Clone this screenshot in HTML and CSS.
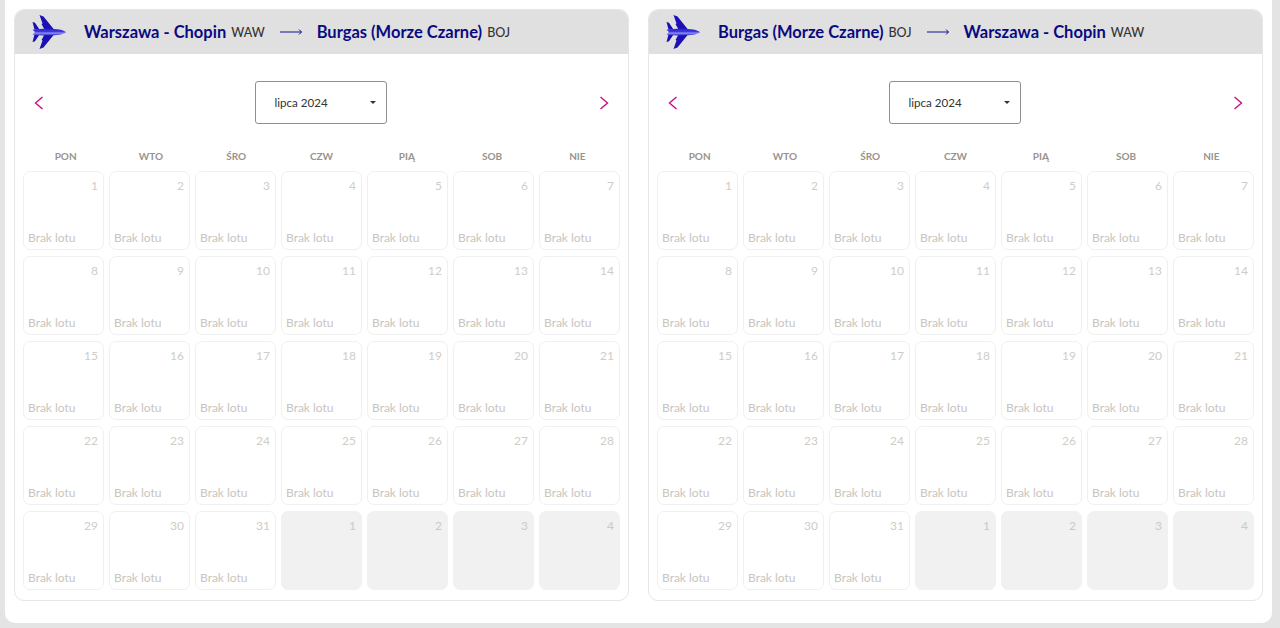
FILE: index.html
```html
<!DOCTYPE html>
<html lang="pl">
  <head>
    <meta charset="UTF-8" />
    <meta name="viewport" content="width=device-width, initial-scale=1.0" />
    <title>Kalendarz lotow</title>
    <link rel="stylesheet" href="styles.css">
  </head>
  <body>
    <div class="page">
      <section class="panel">
        <header class="route">
          <svg class="plane" viewBox="0 0 36 36"><defs><linearGradient id="body1" x1="0" y1="0" x2="0" y2="1"><stop offset="0" stop-color="#2a22c8"/><stop offset="0.45" stop-color="#3f3adf"/><stop offset="0.65" stop-color="#9094f6"/><stop offset="1" stop-color="#2a22c8"/></linearGradient></defs><path fill="#1a10b4" d="M8.500 1l4 1.500 10.500 13h-9.500l-3-5.500 1-.5zM8.500 35l4-1.500 10.500-13h-9.500l-3 5.500 1 .5zM1.500 8l2.500 .8 4.500 6.700h-5zM1.500 28l2.500-.8 4.500-6.700h-5z"/><path fill="url(#body1)" d="M1.500 15.800c8-1.300 20-1.300 27-.3 3 .4 5.500 1.700 6.500 2.800-1 .9-3.500 1.900-6.500 2.400-7 1-19 1-27-.3l2.500-2.300z"/></svg>
          <span class="city">Warszawa - Chopin</span> <span class="code">WAW</span>
          <svg class="arrow" viewBox="0 0 22 8"><path d="M0 4h21.500M19 1.500l2.500 2.500-2.500 2.500" fill="none" stroke="#10108c" stroke-width="1"/></svg>
          <span class="city">Burgas (Morze Czarne)</span> <span class="code">BOJ</span>
        </header>
        <div class="body">
          <div class="nav">
            <svg class="chev" viewBox="0 0 10 14"><path d="M8.500 1l-7 6 7 6" fill="none" stroke="#c5127f" stroke-width="1.400"/></svg>
            <div class="select"><span>lipca 2024</span><i class="caret"></i></div>
            <svg class="chev" viewBox="0 0 10 14"><path d="M1.500 1l7 6-7 6" fill="none" stroke="#c5127f" stroke-width="1.400"/></svg>
          </div>
          <div class="week">
            <span>PON</span><span>WTO</span><span>ŚRO</span><span>CZW</span><span>PIĄ</span><span>SOB</span><span>NIE</span>
          </div>
          <div class="days">
            <div class="day"><b>1</b><span>Brak lotu</span></div>
            <div class="day"><b>2</b><span>Brak lotu</span></div>
            <div class="day"><b>3</b><span>Brak lotu</span></div>
            <div class="day"><b>4</b><span>Brak lotu</span></div>
            <div class="day"><b>5</b><span>Brak lotu</span></div>
            <div class="day"><b>6</b><span>Brak lotu</span></div>
            <div class="day"><b>7</b><span>Brak lotu</span></div>
            <div class="day"><b>8</b><span>Brak lotu</span></div>
            <div class="day"><b>9</b><span>Brak lotu</span></div>
            <div class="day"><b>10</b><span>Brak lotu</span></div>
            <div class="day"><b>11</b><span>Brak lotu</span></div>
            <div class="day"><b>12</b><span>Brak lotu</span></div>
            <div class="day"><b>13</b><span>Brak lotu</span></div>
            <div class="day"><b>14</b><span>Brak lotu</span></div>
            <div class="day"><b>15</b><span>Brak lotu</span></div>
            <div class="day"><b>16</b><span>Brak lotu</span></div>
            <div class="day"><b>17</b><span>Brak lotu</span></div>
            <div class="day"><b>18</b><span>Brak lotu</span></div>
            <div class="day"><b>19</b><span>Brak lotu</span></div>
            <div class="day"><b>20</b><span>Brak lotu</span></div>
            <div class="day"><b>21</b><span>Brak lotu</span></div>
            <div class="day"><b>22</b><span>Brak lotu</span></div>
            <div class="day"><b>23</b><span>Brak lotu</span></div>
            <div class="day"><b>24</b><span>Brak lotu</span></div>
            <div class="day"><b>25</b><span>Brak lotu</span></div>
            <div class="day"><b>26</b><span>Brak lotu</span></div>
            <div class="day"><b>27</b><span>Brak lotu</span></div>
            <div class="day"><b>28</b><span>Brak lotu</span></div>
            <div class="day"><b>29</b><span>Brak lotu</span></div>
            <div class="day"><b>30</b><span>Brak lotu</span></div>
            <div class="day"><b>31</b><span>Brak lotu</span></div>
            <div class="day off"><b>1</b></div>
            <div class="day off"><b>2</b></div>
            <div class="day off"><b>3</b></div>
            <div class="day off"><b>4</b></div>
          </div>
        </div>
      </section>

      <section class="panel">
        <header class="route">
          <svg class="plane" viewBox="0 0 36 36"><defs><linearGradient id="body2" x1="0" y1="0" x2="0" y2="1"><stop offset="0" stop-color="#2a22c8"/><stop offset="0.45" stop-color="#3f3adf"/><stop offset="0.65" stop-color="#9094f6"/><stop offset="1" stop-color="#2a22c8"/></linearGradient></defs><path fill="#1a10b4" d="M8.500 1l4 1.500 10.500 13h-9.500l-3-5.500 1-.5zM8.500 35l4-1.500 10.500-13h-9.500l-3 5.500 1 .5zM1.500 8l2.500 .8 4.500 6.700h-5zM1.500 28l2.500-.8 4.500-6.700h-5z"/><path fill="url(#body2)" d="M1.500 15.800c8-1.300 20-1.300 27-.3 3 .4 5.500 1.700 6.500 2.800-1 .9-3.500 1.900-6.500 2.400-7 1-19 1-27-.3l2.500-2.300z"/></svg>
          <span class="city">Burgas (Morze Czarne)</span> <span class="code">BOJ</span>
          <svg class="arrow" viewBox="0 0 22 8"><path d="M0 4h21.500M19 1.500l2.500 2.500-2.500 2.500" fill="none" stroke="#10108c" stroke-width="1"/></svg>
          <span class="city">Warszawa - Chopin</span> <span class="code">WAW</span>
        </header>
        <div class="body">
          <div class="nav">
            <svg class="chev" viewBox="0 0 10 14"><path d="M8.500 1l-7 6 7 6" fill="none" stroke="#c5127f" stroke-width="1.400"/></svg>
            <div class="select"><span>lipca 2024</span><i class="caret"></i></div>
            <svg class="chev" viewBox="0 0 10 14"><path d="M1.500 1l7 6-7 6" fill="none" stroke="#c5127f" stroke-width="1.400"/></svg>
          </div>
          <div class="week">
            <span>PON</span><span>WTO</span><span>ŚRO</span><span>CZW</span><span>PIĄ</span><span>SOB</span><span>NIE</span>
          </div>
          <div class="days">
            <div class="day"><b>1</b><span>Brak lotu</span></div>
            <div class="day"><b>2</b><span>Brak lotu</span></div>
            <div class="day"><b>3</b><span>Brak lotu</span></div>
            <div class="day"><b>4</b><span>Brak lotu</span></div>
            <div class="day"><b>5</b><span>Brak lotu</span></div>
            <div class="day"><b>6</b><span>Brak lotu</span></div>
            <div class="day"><b>7</b><span>Brak lotu</span></div>
            <div class="day"><b>8</b><span>Brak lotu</span></div>
            <div class="day"><b>9</b><span>Brak lotu</span></div>
            <div class="day"><b>10</b><span>Brak lotu</span></div>
            <div class="day"><b>11</b><span>Brak lotu</span></div>
            <div class="day"><b>12</b><span>Brak lotu</span></div>
            <div class="day"><b>13</b><span>Brak lotu</span></div>
            <div class="day"><b>14</b><span>Brak lotu</span></div>
            <div class="day"><b>15</b><span>Brak lotu</span></div>
            <div class="day"><b>16</b><span>Brak lotu</span></div>
            <div class="day"><b>17</b><span>Brak lotu</span></div>
            <div class="day"><b>18</b><span>Brak lotu</span></div>
            <div class="day"><b>19</b><span>Brak lotu</span></div>
            <div class="day"><b>20</b><span>Brak lotu</span></div>
            <div class="day"><b>21</b><span>Brak lotu</span></div>
            <div class="day"><b>22</b><span>Brak lotu</span></div>
            <div class="day"><b>23</b><span>Brak lotu</span></div>
            <div class="day"><b>24</b><span>Brak lotu</span></div>
            <div class="day"><b>25</b><span>Brak lotu</span></div>
            <div class="day"><b>26</b><span>Brak lotu</span></div>
            <div class="day"><b>27</b><span>Brak lotu</span></div>
            <div class="day"><b>28</b><span>Brak lotu</span></div>
            <div class="day"><b>29</b><span>Brak lotu</span></div>
            <div class="day"><b>30</b><span>Brak lotu</span></div>
            <div class="day"><b>31</b><span>Brak lotu</span></div>
            <div class="day off"><b>1</b></div>
            <div class="day off"><b>2</b></div>
            <div class="day off"><b>3</b></div>
            <div class="day off"><b>4</b></div>
          </div>
        </div>
      </section>
    </div>
  </body>
</html>
```

FILE: styles.css
```css
html, body {
  height: 100%;
}
body {
  margin: 0;
  padding: 0 8px 5px 5px;
  box-sizing: border-box;
  background: #e4e4e4;
  font-family: "Lato", sans-serif;
  overflow: hidden;
}
.page {
  background: #fff;
  border-radius: 0 0 10px 10px;
  padding: 9px 9px 22px;
  display: grid;
  grid-template-columns: 615px 615px;
  gap: 19px;
}
.panel {
  border: 1px solid #e6e6e6;
  border-radius: 10px;
  overflow: hidden;
  box-sizing: border-box;
  height: 592px;
}
.route {
  height: 45px;
  margin: -1px -1px 0;
  background: #e0e0e0;
  display: flex;
  align-items: center;
  padding-left: 17px;
}
.plane {
  width: 36px;
  height: 36px;
  margin-right: 17px;
  flex: none;
}
.city {
  font-size: 16.500px;
  font-weight: 700;
  color: #0a0a80;
}
.code {
  font-size: 12.500px;
  font-weight: 500;
  color: #333;
  margin-left: 5px;
  position: relative;
  top: 1px;
}
.arrow {
  width: 22px;
  height: 8px;
  margin: 0 15px;
  flex: none;
}
.body {
  padding: 0 8px;
}
.nav {
  display: flex;
  justify-content: space-between;
  align-items: center;
  padding: 27px 11px 0;
  height: 43px;
}
.chev {
  width: 10px;
  height: 14px;
}
.select {
  width: 132px;
  height: 43px;
  margin-left: -2px;
  box-sizing: border-box;
  border: 1px solid #8f8f8f;
  border-radius: 3px;
  display: flex;
  align-items: center;
  justify-content: space-between;
  padding: 0 10px 0 19px;
  font-size: 11.600px;
  color: #333;
}
.caret {
  border: 3px solid transparent;
  border-top-color: #333;
  border-bottom: 0;
  width: 0;
  height: 0;
}
.week {
  display: grid;
  grid-template-columns: repeat(7, 1fr);
  margin-top: 21px;
  height: 21px;
  align-items: center;
  text-align: center;
  font-size: 10px;
  font-weight: 700;
  color: #98948c;
}
.days {
  display: grid;
  grid-template-columns: repeat(7, 81px);
  grid-auto-rows: 79px;
  gap: 6px 5px;
  margin-top: 5px;
}
.day {
  border: 1px solid #f0f0f0;
  border-radius: 7px;
  box-sizing: border-box;
  display: flex;
  flex-direction: column;
  justify-content: space-between;
  padding: 6px 5px 4px 4px;
  font-size: 12px;
  color: #c9c5c0;
}
.day b {
  font-weight: 400;
  text-align: right;
  color: #d0ccc7;
}
.off {
  background: #f1f1f1;
  border-color: #f1f1f1;
}
.off b {
  color: #c9c9c9;
}
```
